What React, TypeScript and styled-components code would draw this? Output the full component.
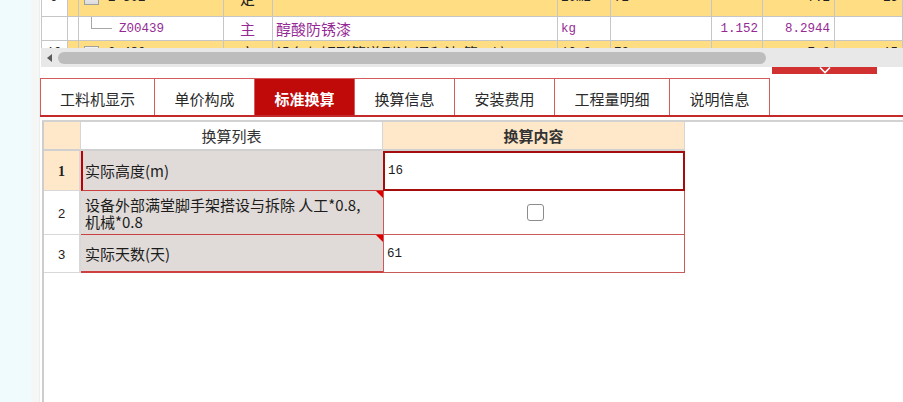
import styled, { createGlobalStyle } from "styled-components";

const GlobalStyle = createGlobalStyle`
  *, *::before, *::after { box-sizing: border-box; }
  html, body { margin: 0; padding: 0; background: #fff; }
  body { font-family: "Noto Sans CJK SC", sans-serif; }
`;

const Page = styled.div`
  display: flex;
  width: 903px;
  height: 402px;
  overflow: hidden;
`;

const SidePane = styled.div`
  width: 31px;
  flex: none;
  background: #effbfd;
`;

const Splitter = styled.div`
  width: 9px;
  flex: none;
  background: #f5f7f7;
  border-right: 1px solid #eceeee;
`;

const Main = styled.div`
  flex: 1;
  min-width: 0;
  display: flex;
  flex-direction: column;
  background: #fff;
`;

/* ---------- upper resource grid ---------- */

const GridViewport = styled.div`
  height: 48px;
  overflow: hidden;
  margin-left: 1px;
`;

const GridRows = styled.div`
  margin-top: -21px;
`;

const GridRow = styled.div<{ $tall?: boolean }>`
  display: grid;
  grid-template-columns: 26px 11px 145px 49px 285px 53px 101px 51px 72px 1fr;
  height: ${(p) => (p.$tall ? 38 : 24)}px;
  border-left: 1px solid #c6c6c6;
`;

const GCell = styled.div<{
  $band?: boolean;
  $align?: "flex-start" | "center" | "flex-end";
  $mono?: boolean;
  $purple?: boolean;
  $bold?: boolean;
}>`
  display: flex;
  align-items: center;
  justify-content: ${(p) => p.$align ?? "flex-start"};
  padding: 0 4px 0 3px;
  border-right: 1px solid #c6c6c6;
  border-bottom: 1px solid #c6c6c6;
  background: ${(p) => (p.$band ? "#ffdd82" : "#fff")};
  color: ${(p) => (p.$purple ? "#952a95" : "#222")};
  font-family: ${(p) =>
    p.$mono
      ? `"Liberation Mono", "Noto Sans CJK SC", monospace`
      : `"Noto Sans CJK SC", sans-serif`};
  font-size: ${(p) => (p.$mono ? "12.5px" : "15px")};
  font-weight: ${(p) => (p.$bold ? 700 : 400)};
  white-space: nowrap;
  overflow: hidden;
`;

const TreeCell = styled(GCell)`
  padding-left: 4px;
`;

const Expander = styled.span`
  flex: none;
  width: 15px;
  height: 14px;
  margin: 0 9px 0 1px;
  border: 1px solid #a0a0a0;
  background: linear-gradient(#f4f4f4, #dcdcdc);
`;

const Elbow = styled.span`
  flex: none;
  align-self: flex-start;
  width: 21px;
  height: 12px;
  margin: 0 7px 0 8px;
  border-left: 1px solid #a8a8a8;
  border-bottom: 1px solid #a8a8a8;
`;

const HScroll = styled.div`
  height: 19px;
  margin-left: 1px;
  display: flex;
  align-items: center;
  gap: 6px;
  padding-left: 6px;
  background: #e8e8e8;
`;

const ArrowLeft = styled.span`
  width: 0;
  height: 0;
  border-top: 4px solid transparent;
  border-bottom: 4px solid transparent;
  border-right: 5px solid #5a5a5a;
`;

const Thumb = styled.div`
  width: 708px;
  height: 12px;
  border-radius: 6px;
  background: #bdbdbd;
`;

const Strip = styled.div`
  height: 11px;
  display: flex;
  justify-content: flex-end;
  padding-right: 26px;
`;

const Collapse = styled.div`
  width: 105px;
  height: 7px;
  display: flex;
  justify-content: center;
  background: #d23131;
`;

/* ---------- tabs ---------- */

const TabBar = styled.div`
  display: flex;
  height: 39px;
  border-bottom: 2px solid #c42a2a;
`;

const Tab = styled.div<{ $active?: boolean; $w: number }>`
  width: ${(p) => p.$w}px;
  display: flex;
  align-items: center;
  justify-content: center;
  padding-top: 3px;
  border-top: 1px solid #d65c5c;
  border-right: 1px solid #d65c5c;
  background: ${(p) => (p.$active ? "#c00a0a" : "#fff")};
  color: ${(p) => (p.$active ? "#fff" : "#2a2a2a")};
  font-size: 15px;
  font-weight: ${(p) => (p.$active ? 700 : 400)};
  &:first-child {
    border-left: 1px solid #d65c5c;
  }
`;

/* ---------- conversion sheet ---------- */

const Panel = styled.div`
  flex: 1;
  margin: 3px 0 0 2px;
  border-top: 2px solid #d2d2d2;
  border-left: 2px solid #cdcdcd;
  background: #fff;
`;

const Sheet = styled.div`
  display: grid;
  grid-template-columns: 37px 302px 302px;
  grid-template-rows: 29px 40px 44px 38px;
  width: 641px;
`;

const HeadCell = styled.div<{ $peach?: boolean; $bold?: boolean }>`
  display: flex;
  align-items: center;
  justify-content: center;
  background: ${(p) => (p.$peach ? "#ffe8c9" : "#fff")};
  border-right: 1px solid #d6d6d6;
  border-bottom: 2px solid #d0d0d0;
  color: #333;
  font-size: 15px;
  font-weight: ${(p) => (p.$bold ? 700 : 400)};
`;

const NumCell = styled.div<{ $selected?: boolean }>`
  display: flex;
  align-items: center;
  justify-content: center;
  background: ${(p) => (p.$selected ? "#ffe8c9" : "#fff")};
  border-right: 2px solid #d8d8d8;
  border-bottom: 1px solid #d8d8d8;
  color: #222;
  font-family: ${(p) =>
    p.$selected ? `"Liberation Serif", serif` : `"Liberation Sans", sans-serif`};
  font-size: ${(p) => (p.$selected ? "14px" : "13px")};
  font-weight: ${(p) => (p.$selected ? 700 : 400)};
  padding-top: 2px;
`;

const NameCell = styled.div<{ $marked?: boolean; $flag?: boolean; $last?: boolean }>`
  position: relative;
  display: flex;
  align-items: center;
  padding-left: ${(p) => (p.$marked ? 2 : 4)}px;
  background: #e0dbd8;
  border-left: ${(p) => (p.$marked ? "2px solid #c00000" : "none")};
  border-bottom: ${(p) => (p.$last ? 2 : 1)}px solid #cc4040;
  color: #1c1c1c;
  font-size: 15px;
  line-height: 17px;
  &::after {
    content: "";
    display: ${(p) => (p.$flag ? "block" : "none")};
    position: absolute;
    top: 0;
    right: 0;
    border-top: 7px solid #e00000;
    border-left: 7px solid transparent;
  }
`;

const ValueCell = styled.div<{ $selected?: boolean; $center?: boolean }>`
  display: flex;
  align-items: center;
  justify-content: ${(p) => (p.$center ? "center" : "flex-start")};
  padding-left: 3px;
  background: #fff;
  border-top: ${(p) => (p.$selected ? "2px solid #a50c0c" : "none")};
  border-left: ${(p) => (p.$selected ? "2px" : "1px")} solid
    ${(p) => (p.$selected ? "#a50c0c" : "#c85a5a")};
  border-right: ${(p) => (p.$selected ? "2px" : "1px")} solid
    ${(p) => (p.$selected ? "#a50c0c" : "#c85a5a")};
  border-bottom: ${(p) => (p.$selected ? "2px" : "1px")} solid
    ${(p) => (p.$selected ? "#a50c0c" : "#c85a5a")};
  color: #1c1c1c;
  font-family: "Liberation Mono", monospace;
  font-size: 12.5px;
`;

const Check = styled.input`
  appearance: none;
  width: 17px;
  height: 17px;
  margin: 0;
  border: 1px solid #8c8c8c;
  border-radius: 3px;
  background: #fff;
`;

type GridItem = {
  tall?: boolean;
  band: boolean;
  no: string;
  tree: "box" | "elbow";
  code: string;
  bold?: boolean;
  type: string;
  name: string;
  unit: string;
  amount: string;
  qty: string;
  price: string;
  total: string;
};

const gridItems: GridItem[] = [
  {
    tall: true,
    band: true,
    no: "9",
    tree: "box",
    code: "2-502",
    bold: true,
    type: "定",
    name: "",
    unit: "10m2",
    amount: "72",
    qty: "",
    price: "7.2",
    total: "15",
  },
  {
    band: false,
    no: "",
    tree: "elbow",
    code: "Z00439",
    type: "主",
    name: "醇酸防锈漆",
    unit: "kg",
    amount: "",
    qty: "1.152",
    price: "8.2944",
    total: "",
  },
  {
    band: true,
    no: "10",
    tree: "box",
    code: "2-480",
    type: "定",
    name: "设备与矩形管道刷油 调和漆 第一遍",
    unit: "10m2",
    amount: "72",
    qty: "",
    price: "7.0",
    total: "15",
  },
];

const tabs = [
  { label: "工料机显示", w: 115 },
  { label: "单价构成", w: 100 },
  { label: "标准换算", w: 100, active: true },
  { label: "换算信息", w: 100 },
  { label: "安装费用", w: 100 },
  { label: "工程量明细", w: 115 },
  { label: "说明信息", w: 100 },
];

export default function App() {
  return (
    <>
      <GlobalStyle />
      <Page>
        <SidePane />
        <Splitter />
        <Main>
          <GridViewport>
            <GridRows>
              {gridItems.map((r, i) => {
                const purple = !r.band;
                return (
                  <GridRow key={i} $tall={r.tall}>
                    <GCell $align="center" $mono>
                      {r.no}
                    </GCell>
                    <GCell $band={r.band} />
                    <TreeCell $band={r.band} $mono $purple={purple} $bold={r.bold}>
                      {r.tree === "box" ? <Expander /> : <Elbow />}
                      {r.code}
                    </TreeCell>
                    <GCell $band={r.band} $align="center" $purple={purple}>
                      {r.type}
                    </GCell>
                    <GCell $band={r.band} $purple={purple}>
                      {r.name}
                    </GCell>
                    <GCell $band={r.band} $mono $purple={purple}>
                      {r.unit}
                    </GCell>
                    <GCell $band={r.band} $mono $purple={purple}>
                      {r.amount}
                    </GCell>
                    <GCell $band={r.band} $mono $purple={purple} $align="flex-end">
                      {r.qty}
                    </GCell>
                    <GCell $band={r.band} $mono $purple={purple} $align="flex-end">
                      {r.price}
                    </GCell>
                    <GCell $band={r.band} $mono $purple={purple} $align="flex-end">
                      {r.total}
                    </GCell>
                  </GridRow>
                );
              })}
            </GridRows>
          </GridViewport>
          <HScroll>
            <ArrowLeft />
            <Thumb />
          </HScroll>
          <Strip>
            <Collapse>
              <svg width="12" height="7" viewBox="0 0 12 7">
                <polyline
                  points="1,0.5 6,5.5 11,0.5"
                  fill="none"
                  stroke="#fff"
                  strokeWidth="1.6"
                />
              </svg>
            </Collapse>
          </Strip>
          <TabBar>
            {tabs.map((t) => (
              <Tab key={t.label} $w={t.w} $active={t.active}>
                {t.label}
              </Tab>
            ))}
          </TabBar>
          <Panel>
            <Sheet>
              <HeadCell $peach />
              <HeadCell>换算列表</HeadCell>
              <HeadCell $peach $bold>
                换算内容
              </HeadCell>

              <NumCell $selected>1</NumCell>
              <NameCell $marked>实际高度(m)</NameCell>
              <ValueCell $selected>16</ValueCell>

              <NumCell>2</NumCell>
              <NameCell $flag>
                <span>
                  设备外部满堂脚手架搭设与拆除 人工*0.8,
                  <br />
                  机械*0.8
                </span>
              </NameCell>
              <ValueCell $center>
                <Check type="checkbox" readOnly />
              </ValueCell>

              <NumCell>3</NumCell>
              <NameCell $flag $last>
                实际天数(天)
              </NameCell>
              <ValueCell>61</ValueCell>
            </Sheet>
          </Panel>
        </Main>
      </Page>
    </>
  );
}
